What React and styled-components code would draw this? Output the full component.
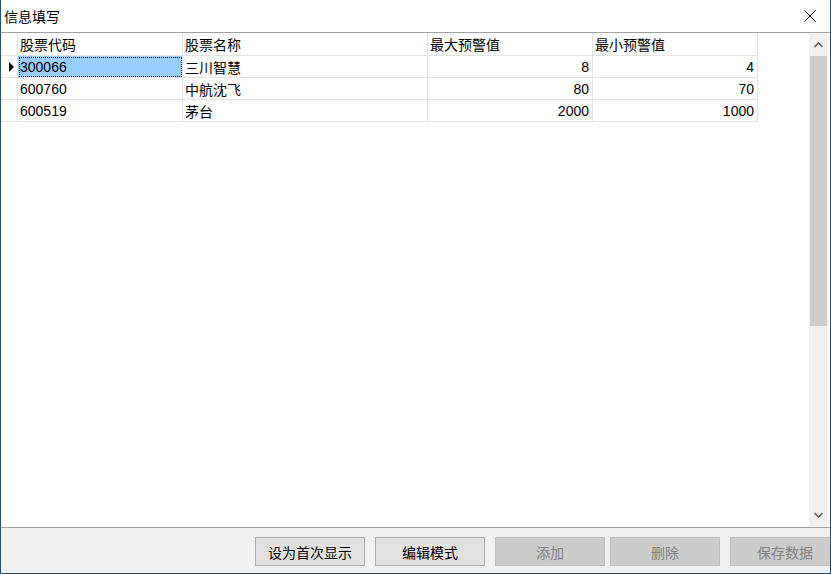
import React from 'react';
import styled, { createGlobalStyle } from 'styled-components';

const GlobalStyle = createGlobalStyle`
  html, body {
    margin: 0;
    padding: 0;
    background: #ffffff;
  }
  body {
    font-family: "Liberation Sans", "Noto Sans CJK SC", sans-serif;
    font-size: 14px;
    color: #000;
  }
  * {
    box-sizing: border-box;
  }
`;

const Window = styled.div`
  width: 831px;
  height: 574px;
  display: flex;
  flex-direction: column;
  background: #ffffff;
  border-left: 1px solid #1b4f78;
  border-right: 1px solid #1b4f78;
  border-bottom: 1px solid #1b4f78;
  overflow: hidden;
`;

const TitleBar = styled.div`
  height: 32px;
  flex: none;
  display: flex;
  align-items: center;
  justify-content: space-between;
  padding: 0 14px 0 3px;
  font-size: 14px;
`;

const CloseButton = styled.div`
  width: 12px;
  height: 12px;
  display: flex;
`;

const GridFrame = styled.div`
  flex: 1;
  display: flex;
  border-top: 1px solid #a0a0a0;
  border-bottom: 1px solid #a0a0a0;
  background: #ffffff;
  min-height: 0;
`;

const TableArea = styled.div`
  flex: 1;
`;

const Table = styled.div`
  display: grid;
  grid-template-columns: 17px 165px 245px 165px 165px;
  grid-template-rows: 23px;
  grid-auto-rows: 22px;
  width: 757px;
`;

const HeaderCell = styled.div`
  display: flex;
  align-items: center;
  padding-left: 2px;
  border-right: 1px solid #e3e3e3;
  border-bottom: 1px solid #e3e3e3;
  white-space: nowrap;
`;

const RowHead = styled.div`
  display: flex;
  align-items: center;
  padding-left: 8px;
  border-right: 1px solid #e3e3e3;
  border-bottom: 1px solid #e3e3e3;
`;

const Arrow = styled.span`
  width: 0;
  height: 0;
  border-left: 5px solid #000;
  border-top: 5.5px solid transparent;
  border-bottom: 5.5px solid transparent;
`;

const Cell = styled.div`
  display: flex;
  align-items: center;
  justify-content: ${(p) => (p.$num ? 'flex-end' : 'flex-start')};
  padding: ${(p) => (p.$num ? '0 3px 0 0' : '0 0 0 2px')};
  border-right: 1px solid #e3e3e3;
  border-bottom: 1px solid #e3e3e3;
  white-space: nowrap;
  background: ${(p) => (p.$selected ? '#99ccff' : 'transparent')};
  outline: ${(p) => (p.$selected ? '1px dotted #000' : 'none')};
  outline-offset: -2px;
`;

const Scrollbar = styled.div`
  width: 19px;
  margin: 1px 2px 1px 0;
  display: flex;
  flex-direction: column;
  background: #f0f0f0;
`;

const ScrollArrow = styled.div`
  height: 22px;
  flex: none;
  display: flex;
  align-items: center;
  justify-content: center;
`;

const Thumb = styled.div`
  height: 270px;
  margin: 0 1px;
  background: #cdcdcd;
`;

const Track = styled.div`
  flex: 1;
`;

const ButtonBar = styled.div`
  height: 45px;
  flex: none;
  display: flex;
  align-items: flex-start;
  padding: 9px 0 0 254px;
  background: #f0f0f0;
`;

const Button = styled.div`
  flex: none;
  width: 110px;
  height: 29px;
  margin-left: ${(p) => p.$gap}px;
  display: flex;
  align-items: center;
  justify-content: center;
  font-size: 14px;
  background: ${(p) => (p.$disabled ? '#cccccc' : '#e1e1e1')};
  border: 1px solid ${(p) => (p.$disabled ? '#bfbfbf' : '#adadad')};
  color: ${(p) => (p.$disabled ? '#838383' : '#000')};
`;

const rows = [
  { code: '300066', name: '三川智慧', max: '8', min: '4' },
  { code: '600760', name: '中航沈飞', max: '80', min: '70' },
  { code: '600519', name: '茅台', max: '2000', min: '1000' },
];

const buttons = [
  { label: '设为首次显示', gap: 0 },
  { label: '编辑模式', gap: 10 },
  { label: '添加', gap: 10, disabled: true },
  { label: '删除', gap: 5, disabled: true },
  { label: '保存数据', gap: 10, disabled: true },
];

const Chevron = ({ down }) => (
  <svg width="9" height="6" viewBox="0 0 9 6">
    <path
      d={down ? 'M0.5 1 L4.5 5 L8.5 1' : 'M0.5 5 L4.5 1 L8.5 5'}
      fill="none"
      stroke="#606060"
      strokeWidth="1.6"
    />
  </svg>
);

const App = () => (
  <>
    <GlobalStyle />
    <Window>
      <TitleBar>
        <span>信息填写</span>
        <CloseButton>
          <svg width="12" height="12" viewBox="0 0 12 12">
            <path d="M0.5 0.5 L11.5 11.5 M11.5 0.5 L0.5 11.5" stroke="#000" strokeWidth="1" />
          </svg>
        </CloseButton>
      </TitleBar>
      <GridFrame>
        <TableArea>
          <Table>
            <HeaderCell />
            <HeaderCell>股票代码</HeaderCell>
            <HeaderCell>股票名称</HeaderCell>
            <HeaderCell>最大预警值</HeaderCell>
            <HeaderCell>最小预警值</HeaderCell>
            {rows.map((r, i) => (
              <React.Fragment key={r.code}>
                <RowHead>{i === 0 && <Arrow />}</RowHead>
                <Cell $selected={i === 0}>{r.code}</Cell>
                <Cell>{r.name}</Cell>
                <Cell $num>{r.max}</Cell>
                <Cell $num>{r.min}</Cell>
              </React.Fragment>
            ))}
          </Table>
        </TableArea>
        <Scrollbar>
          <ScrollArrow>
            <Chevron />
          </ScrollArrow>
          <Thumb />
          <Track />
          <ScrollArrow>
            <Chevron down />
          </ScrollArrow>
        </Scrollbar>
      </GridFrame>
      <ButtonBar>
        {buttons.map((b) => (
          <Button key={b.label} $gap={b.gap} $disabled={b.disabled}>
            {b.label}
          </Button>
        ))}
      </ButtonBar>
    </Window>
  </>
);

export default App;
